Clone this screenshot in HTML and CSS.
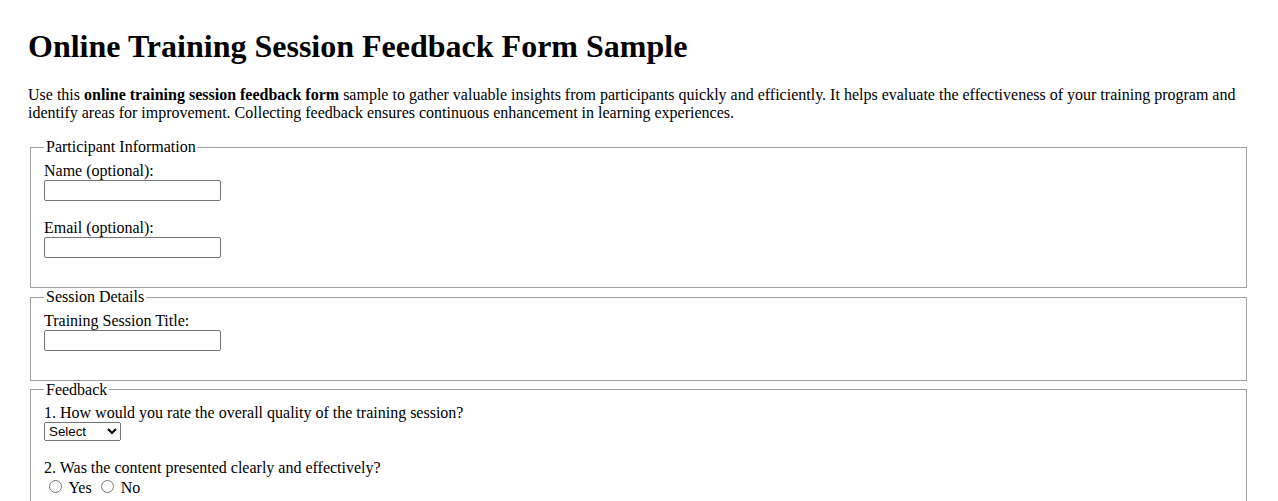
FILE: index.html
```html
<!DOCTYPE html>
<html lang="en">
<head>
<meta charset="utf-8">
<title>Online Training Session Feedback Form Sample</title>
<link rel="stylesheet" href="styles.css">
</head>
<body class="page">
<h1 class="title">Online Training Session Feedback Form Sample</h1>
<p class="intro">Use this <strong>online training session feedback form</strong> sample to gather valuable insights from participants quickly and efficiently. It helps evaluate the effectiveness of your training program and identify areas for improvement. Collecting feedback ensures continuous enhancement in learning experiences.</p>
<form class="form">
<fieldset class="group">
<legend class="group-title">Participant Information</legend>
<label class="field-label" for="name">Name (optional):</label><br>
<input class="text-input" type="text" id="name" name="name"><br><br>
<label class="field-label" for="email">Email (optional):</label><br>
<input class="text-input" type="email" id="email" name="email"><br><br>
</fieldset>
<fieldset class="group">
<legend class="group-title">Session Details</legend>
<label class="field-label" for="title">Training Session Title:</label><br>
<input class="text-input" type="text" id="title" name="title"><br><br>
</fieldset>
<fieldset class="group">
<legend class="group-title">Feedback</legend>
<label class="field-label" for="quality">1. How would you rate the overall quality of the training session?</label><br>
<select class="select-input" id="quality" name="quality">
<option>Select</option>
<option>Excellent</option>
<option>Good</option>
<option>Average</option>
<option>Poor</option>
</select><br><br>
<label class="field-label">2. Was the content presented clearly and effectively?</label><br>
<input class="radio-input" type="radio" name="clear" value="yes"> Yes
<input class="radio-input" type="radio" name="clear" value="no"> No<br><br>
</fieldset>
</form>
</body>
</html>
```
FILE: styles.css
```css
html {
  background: #ffffff;
}
.page {
  margin: 0 29px 0 28px;
  font-family: "Liberation Serif", "Times New Roman", serif;
  font-size: 16px;
  color: #000000;
  background: #ffffff;
}
.title {
  font-size: 32px;
  font-weight: bold;
  margin: 28px 0 21.44px;
}
.intro {
  margin: 16px 0;
}
.form {
  margin: 0;
}
.group {
  margin: 0 2px;
  padding: 5.6px 13px 11px;
  border: 1px solid #a0a0a0;
}
.group-title {
  padding: 0 2px;
}
.text-input,
.select-input {
  font-family: "Liberation Sans", Arial, sans-serif;
  font-size: 13.333px;
}
.text-input {
  box-sizing: border-box;
  width: 177px;
  height: 21px;
  border: 1px solid #767676;
  border-radius: 2px;
  padding: 1px 2px;
}
.select-input {
  box-sizing: border-box;
  width: 77px;
  height: 19px;
}
.radio-input {
  margin: 3px 3px 0 5px;
}
```
